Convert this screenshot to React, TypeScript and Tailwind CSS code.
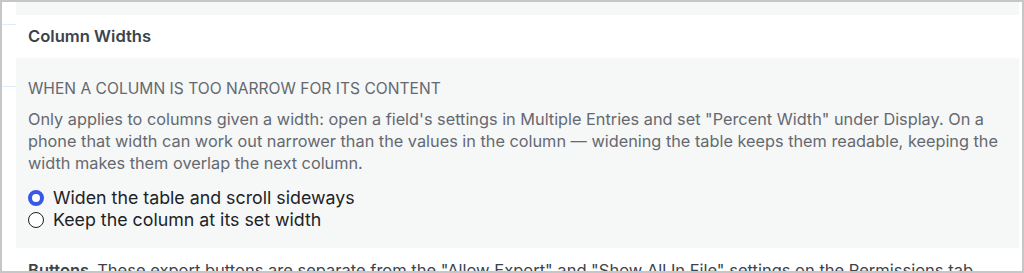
export default function App() {
  return (
    <div
      className="w-[1024px] h-[273px] overflow-hidden border-2 border-[#c5c6c8] bg-white flex"
      style={{ fontFamily: 'Inter, "Noto Sans", sans-serif' }}
    >
      <div className="w-[14px] shrink-0 flex flex-col">
        <div className="h-[22px]" />
        <div className="h-px bg-[#e3ecf3]" />
        <div className="h-[61px]" />
        <div className="h-px bg-[#e3ecf3]" />
      </div>
      <div className="flex-1 mr-[3px] flex flex-col">
        <div className="h-[13px] shrink-0 bg-[#f6f7f7]" />
        <div className="h-[43px] shrink-0 px-3 flex items-center">
          <h2 className="text-[16.6px] font-semibold text-[#3c434a]">Column Widths</h2>
        </div>
        <div className="h-[190px] shrink-0 bg-[#f6f7f7] px-3 pt-[20px]">
          <h3 className="text-[15.6px] leading-[22px] text-[#646970] uppercase">
            When a column is too narrow for its content
          </h3>
          <p className="mt-[8px] text-[16.3px] leading-[22px] text-[#646970]">
            Only applies to columns given a width: open a field's settings in Multiple Entries and set "Percent Width" under
            Display. On a phone that width can work out narrower than the values in the column — widening the table keeps
            them readable, keeping the width makes them overlap the next column.
          </p>
          <div className="mt-[13px] flex flex-col">
            <label className="flex items-center gap-[9px] h-[22px] text-[17.8px] text-[#1d2327]">
              <span className="w-[16px] h-[16px] shrink-0 rounded-full border-[4px] border-[#3858e9] bg-white" />
              Widen the table and scroll sideways
            </label>
            <label className="flex items-center gap-[9px] h-[22px] text-[17.8px] text-[#1d2327]">
              <span className="w-[16px] h-[16px] shrink-0 rounded-full border border-[#1e1e1e] bg-white" />
              Keep the column at its set width
            </label>
          </div>
        </div>
        <div className="shrink-0 px-3 pt-[11px] text-[16.5px] leading-[22px] text-[#3c434a] whitespace-nowrap">
          <span className="font-semibold">Buttons</span>
          <span className="ml-2">
            These export buttons are separate from the "Allow Export" and "Show All In File" settings on the Permissions tab.
          </span>
        </div>
      </div>
    </div>
  )
}
